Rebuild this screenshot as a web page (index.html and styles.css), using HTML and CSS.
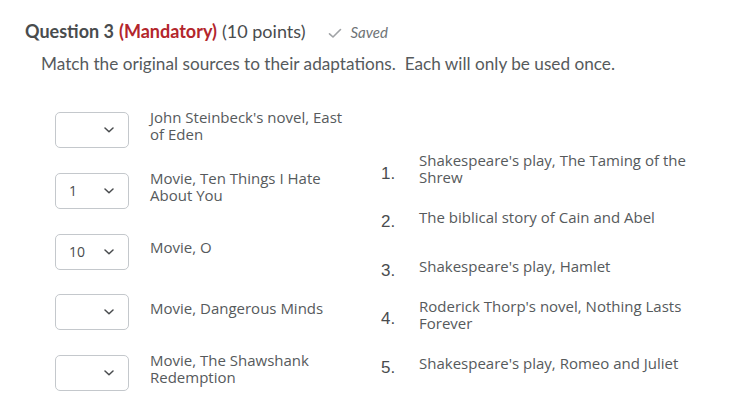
FILE: index.html
```html
<!DOCTYPE html>
<html>
<head>
<meta charset="utf-8">
<link rel="stylesheet" href="styles.css">
</head>
<body>
<div class="page">
  <div class="qhead">
    <span class="qtitle">Question 3</span>
    <span class="mand">(Mandatory)</span>
    <span class="pts">(10 points)</span>
    <span class="saved">
      <svg class="check" width="14" height="11" viewBox="0 0 14 11"><path d="M1.5 5.8 L5 9 L12.5 1.5" fill="none" stroke="#a0a3a6" stroke-width="1.6" stroke-linecap="round" stroke-linejoin="round"/></svg>
      <span class="savedtxt">Saved</span>
    </span>
  </div>
  <p class="instr">Match the original sources to their adaptations.&nbsp; Each will only be used once.</p>
  <div class="match">
    <div class="left">
      <div class="lrow"><div class="sel"><span class="val"></span><svg class="chev" width="10" height="6" viewBox="0 0 10 6"><path d="M1 1 L5 4.8 L9 1" fill="none" stroke="#494c4e" stroke-width="1.5" stroke-linecap="round" stroke-linejoin="round"/></svg></div><div class="ltxt">John Steinbeck's novel, East of Eden</div></div>
      <div class="lrow"><div class="sel"><span class="val">1</span><svg class="chev" width="10" height="6" viewBox="0 0 10 6"><path d="M1 1 L5 4.8 L9 1" fill="none" stroke="#494c4e" stroke-width="1.5" stroke-linecap="round" stroke-linejoin="round"/></svg></div><div class="ltxt">Movie, Ten Things I Hate About You</div></div>
      <div class="lrow"><div class="sel"><span class="val">10</span><svg class="chev" width="10" height="6" viewBox="0 0 10 6"><path d="M1 1 L5 4.8 L9 1" fill="none" stroke="#494c4e" stroke-width="1.5" stroke-linecap="round" stroke-linejoin="round"/></svg></div><div class="ltxt">Movie, O</div></div>
      <div class="lrow"><div class="sel"><span class="val"></span><svg class="chev" width="10" height="6" viewBox="0 0 10 6"><path d="M1 1 L5 4.8 L9 1" fill="none" stroke="#494c4e" stroke-width="1.5" stroke-linecap="round" stroke-linejoin="round"/></svg></div><div class="ltxt">Movie, Dangerous Minds</div></div>
      <div class="lrow"><div class="sel"><span class="val"></span><svg class="chev" width="10" height="6" viewBox="0 0 10 6"><path d="M1 1 L5 4.8 L9 1" fill="none" stroke="#494c4e" stroke-width="1.5" stroke-linecap="round" stroke-linejoin="round"/></svg></div><div class="ltxt">Movie, The Shawshank Redemption</div></div>
    </div>
    <div class="right">
      <div class="rrow"><span class="num">1.</span><span class="rtxt">Shakespeare's play, The Taming of the Shrew</span></div>
      <div class="rrow"><span class="num">2.</span><span class="rtxt">The biblical story of Cain and Abel</span></div>
      <div class="rrow"><span class="num">3.</span><span class="rtxt">Shakespeare's play, Hamlet</span></div>
      <div class="rrow"><span class="num">4.</span><span class="rtxt">Roderick Thorp's novel, Nothing Lasts Forever</span></div>
      <div class="rrow"><span class="num">5.</span><span class="rtxt">Shakespeare's play, Romeo and Juliet</span></div>
    </div>
  </div>
</div>
</body>
</html>
```

FILE: styles.css
```css
html, body {
  margin: 0;
  padding: 0;
  background: #ffffff;
}
.page {
  padding: 20px 0 0 25px;
  font-family: Lato, "Open Sans", sans-serif;
  color: #494c4e;
}
.qhead {
  display: flex;
  align-items: baseline;
  font-size: 18px;
  line-height: 22px;
}
.qtitle {
  font-weight: 700;
  margin-right: 5px;
}
.mand {
  font-weight: 700;
  color: #b3262c;
  margin-right: 5px;
}
.pts {
  font-weight: 400;
}
.saved {
  margin-left: 23px;
  display: flex;
  align-items: baseline;
  color: #6e7376;
  font-size: 15px;
}
.check {
  margin-right: 8px;
  position: relative;
  top: 1px;
}
.savedtxt {
  font-style: italic;
}
.instr {
  margin: 10px 0 0 16px;
  font-size: 17.2px;
  line-height: 22px;
  color: #565a5c;
}
.match {
  display: flex;
  margin-top: 37px;
  padding-left: 30px;
  font-family: "Open Sans", "Noto Sans", sans-serif;
  color: #565a5c;
}
.left {
  width: 326px;
  display: flex;
  flex-direction: column;
  gap: 24.75px;
}
.lrow {
  display: flex;
  align-items: center;
  height: 36px;
}
.sel {
  width: 72px;
  height: 34px;
  border: 1px solid #c4c8cc;
  border-radius: 5px;
  display: flex;
  align-items: center;
  flex-shrink: 0;
  box-sizing: content-box;
}
.val {
  width: 35px;
  padding-left: 13px;
  font-family: "Open Sans", sans-serif;
  font-size: 14px;
  color: #494c4e;
}
.chev {
  display: block;
}
.ltxt {
  margin-left: 21px;
  margin-bottom: 8px;
  width: 210px;
  font-size: 15px;
  line-height: 17px;
}
.right {
  padding-top: 33px;
  display: flex;
  flex-direction: column;
}
.rrow {
  display: flex;
  align-items: center;
  height: 48.5px;
}
.num {
  width: 38px;
  font-family: "Liberation Sans", Arial, sans-serif;
  font-size: 17px;
  color: #494c4e;
  padding-top: 9px;
}
.rtxt {
  width: 290px;
  font-size: 15px;
  line-height: 17px;
}
```
